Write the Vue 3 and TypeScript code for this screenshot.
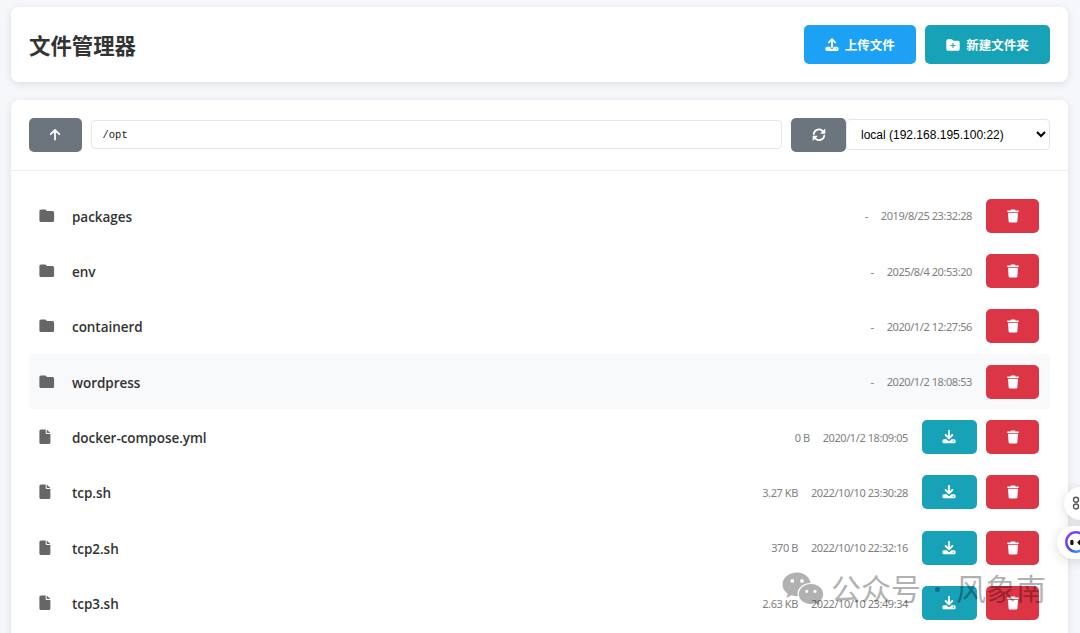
<script setup lang="ts">
import { ref } from 'vue'

interface FileItem {
    name: string
    isDir: boolean
    size: string
    time: string
}

const currentPath = ref('/opt')
const server = ref('local')
const active = ref('wordpress')

const files: FileItem[] = [
    { name: 'packages', isDir: true, size: '-', time: '2019/8/25 23:32:28' },
    { name: 'env', isDir: true, size: '-', time: '2025/8/4 20:53:20' },
    { name: 'containerd', isDir: true, size: '-', time: '2020/1/2 12:27:56' },
    { name: 'wordpress', isDir: true, size: '-', time: '2020/1/2 18:08:53' },
    { name: 'docker-compose.yml', isDir: false, size: '0 B', time: '2020/1/2 18:09:05' },
    { name: 'tcp.sh', isDir: false, size: '3.27 KB', time: '2022/10/10 23:30:28' },
    { name: 'tcp2.sh', isDir: false, size: '370 B', time: '2022/10/10 22:32:16' },
    { name: 'tcp3.sh', isDir: false, size: '2.63 KB', time: '2022/10/10 23:49:34' },
]
</script>

<template>
    <div class="page">
        <header class="card header">
            <h1>文件管理器</h1>
            <div class="header-actions">
                <button class="btn primary">
                    <svg class="icon" viewBox="0 0 14 14">
                        <path d="M7 9V1.6M3.9 4.3 7 1.2l3.1 3.1" class="line" />
                        <path
                            d="M2 8.7h3.4v.6a1.6 1.6 0 0 0 3.2 0v-.6H12a1.6 1.6 0 0 1 1.6 1.6v1A1.6 1.6 0 0 1 12 12.9H2a1.6 1.6 0 0 1-1.6-1.6v-1A1.6 1.6 0 0 1 2 8.7Zm9.3 1.5a.6.6 0 1 0 0 1.2.6.6 0 0 0 0-1.2Z"
                        />
                    </svg>
                    <span>上传文件</span>
                </button>
                <button class="btn info">
                    <svg class="icon" viewBox="0 0 14 14">
                        <path
                            fill-rule="evenodd"
                            d="M2 1.2h3.2c.5 0 .9.2 1.2.5l.7.7c.2.2.4.3.7.3H12a1.7 1.7 0 0 1 1.7 1.7v6.7a1.7 1.7 0 0 1-1.7 1.7H2a1.7 1.7 0 0 1-1.7-1.700V2.900A1.700 1.700 0 0 1 2 1.200Zm4.500 3.700v2H4.500v1h2v2h1v-2h2v-1h-2v-2Z"
                        />
                    </svg>
                    <span>新建文件夹</span>
                </button>
            </div>
        </header>

        <main class="card content">
            <div class="toolbar">
                <button class="btn secondary up">
                    <svg class="icon" viewBox="0 0 14 14">
                        <path d="M7 11.600V2.200M2.700 6.200 7 1.900l4.300 4.300" class="line" />
                    </svg>
                </button>
                <input v-model="currentPath" class="path" type="text" />
                <div class="server">
                    <button class="btn secondary refresh">
                        <svg class="icon" viewBox="0 0 14 14">
                            <path d="M1.700 6A5.300 5.300 0 0 1 11 3.400M12.300 7.600A5.300 5.300 0 0 1 3 10.200" class="line" />
                            <path d="M13.300.600v5.200H8.100ZM.700 13v-5.200h5.200Z" />
                        </svg>
                    </button>
                    <select v-model="server">
                        <option value="local">local (192.168.195.100:22)</option>
                    </select>
                </div>
            </div>

            <ul class="file-list">
                <li v-for="file in files" :key="file.name" class="file" :class="{ active: file.name === active }">
                    <svg v-if="file.isDir" class="file-icon" viewBox="0 0 16 16">
                        <path
                            d="M2 1.500h3.800c.5 0 .8.100 1.100.400l.8.800c.3.300.6.400 1 .400H13.500a1.600 1.600 0 0 1 1.600 1.600v7.700a1.600 1.600 0 0 1-1.600 1.600H2A1.600 1.600 0 0 1 .400 12.400V3.100A1.600 1.600 0 0 1 2 1.500Z"
                        />
                    </svg>
                    <svg v-else class="file-icon" viewBox="0 0 16 16">
                        <path
                            d="M2 .500h4.700v3.500a1 1 0 0 0 1 1h3.700v8.400a1.600 1.600 0 0 1-1.600 1.600H2A1.600 1.600 0 0 1 .400 13.400V2.100A1.600 1.600 0 0 1 2 .500ZM7.700.500l3.700 3.600H7.700Z"
                        />
                    </svg>
                    <span class="name">{{ file.name }}</span>
                    <span class="meta">{{ file.size }}</span>
                    <span class="meta time">{{ file.time }}</span>
                    <div class="actions">
                        <button v-if="!file.isDir" class="btn info small">
                            <svg class="icon" viewBox="0 0 14 14">
                                <path d="M7 .800v7.200M3.700 5 7 8.300 10.300 5" class="line" />
                                <path
                                    d="M1.900 9.200h2.700l1.300 1.200a1.600 1.600 0 0 0 2.200 0l1.300-1.200h2.700a1.500 1.500 0 0 1 1.500 1.500v1a1.500 1.500 0 0 1-1.500 1.500H1.900a1.500 1.500 0 0 1-1.500-1.500v-1a1.500 1.500 0 0 1 1.500-1.500Zm9.500 1.400a.6.6 0 1 0 0 1.200.6.6 0 0 0 0-1.200Z"
                                />
                            </svg>
                        </button>
                        <button class="btn danger small">
                            <svg class="icon" viewBox="0 0 14 14">
                                <path
                                    d="M5 .500h4l.5.900h3.200v1.500H1.300V1.400h3.200ZM2 3.700h10l-.6 8.500a1.400 1.400 0 0 1-1.400 1.300H4a1.400 1.400 0 0 1-1.400-1.300Z"
                                />
                            </svg>
                        </button>
                    </div>
                </li>
            </ul>
        </main>

        <div class="float-btn apps">
            <svg viewBox="0 0 16 16">
                <g fill="none" stroke="#555" stroke-width="1.400">
                    <circle cx="4" cy="4.700" r="2.500" />
                    <circle cx="11.500" cy="4.700" r="2.500" />
                    <circle cx="4" cy="11.500" r="2.500" />
                    <circle cx="11.500" cy="11.500" r="2.500" />
                </g>
            </svg>
        </div>
        <div class="float-btn bot">
            <svg viewBox="0 0 24 24">
                <defs>
                    <linearGradient id="ring" x1="0" y1="0" x2="1" y2="1">
                        <stop offset="0" stop-color="#9a3df0" />
                        <stop offset=".5" stop-color="#4b45f5" />
                        <stop offset="1" stop-color="#28c4f5" />
                    </linearGradient>
                </defs>
                <circle cx="12" cy="12" r="9.700" fill="#fff" stroke="url(#ring)" stroke-width="2.500" />
                <rect x="6.300" y="10" width="3.200" height="5" rx="1" fill="#111" />
                <path d="m17 10-2.500 2.500 2.500 2.500" fill="none" stroke="#111" stroke-width="2" />
            </svg>
        </div>

        <div class="watermark">
            <svg viewBox="0 0 42 34">
                <path
                    fill-rule="evenodd"
                    d="M15 .500C7 .500.500 5.800.500 12.500c0 3.700 2 7 5.200 9.200l-1.300 4.200 5-2.600c1.800.6 4.200 1 6.500.8-1.700-7 4.200-13 12.700-13C27.600 5 22 .500 15 .500ZM10.300 7a1.900 1.900 0 1 1 0 3.800 1.900 1.900 0 0 1 0-3.800Zm9.700 0a1.900 1.900 0 1 1 0 3.800A1.900 1.900 0 0 1 20 7Z"
                />
                <path
                    fill-rule="evenodd"
                    d="M29 12c6.800 0 12.200 4.500 12.200 10.200 0 3-1.600 5.800-4.200 7.700l1 3.400-4-2.100c-1.600.5-3.300.8-5 .8-6.800 0-12.200-4.400-12.200-9.800S22.200 12 29 12Zm-4.200 5.700a1.600 1.600 0 1 0 0 3.200 1.600 1.600 0 0 0 0-3.200Zm8.200 0a1.600 1.600 0 1 0 0 3.200 1.600 1.600 0 0 0 0-3.200Z"
                />
            </svg>
            <span class="account">公众号</span>
            <span class="dot"></span>
            <span class="account">风象南</span>
        </div>
    </div>
</template>

<style>
body {
    margin: 0;
    overflow: hidden;
    background: #f5f7fb;
}
</style>

<style scoped>
.page {
    position: relative;
    box-sizing: border-box;
    height: 633px;
    padding: 7px 12px 0 11px;
    overflow: hidden;
    background: #f5f7fb;
    color: #333;
    font-family: 'Noto Sans', 'Noto Sans CJK SC', sans-serif;
}
.card {
    border-radius: 8px;
    background: #fff;
    box-shadow: 0 2px 9px rgba(0, 0, 0, 0.1);
}
.header {
    display: flex;
    align-items: center;
    justify-content: space-between;
    box-sizing: border-box;
    height: 75px;
    margin-bottom: 18px;
    padding: 0 18px;
}
h1 {
    margin: 0;
    font-size: 21.4px;
    font-weight: 700;
    line-height: 30px;
    font-family: 'Noto Sans CJK SC', sans-serif;
}
.header-actions {
    display: flex;
    gap: 9px;
}
.btn {
    display: flex;
    align-items: center;
    justify-content: center;
    box-sizing: border-box;
    height: 39px;
    padding: 0;
    border: 0;
    border-radius: 5px;
    color: #fff;
    font: 700 12.5px 'Noto Sans CJK SC', sans-serif;
}
.icon {
    width: 14px;
    height: 14px;
    fill: currentColor;
}
.line {
    fill: none;
    stroke: currentColor;
    stroke-width: 1.8;
    stroke-linecap: round;
    stroke-linejoin: round;
}
.header .btn {
    gap: 6px;
}
.primary {
    width: 112.5px;
    background: #1da1f5;
}
.info {
    width: 125px;
    background: #17a2b8;
}
.secondary {
    height: 34px;
    background: #6c757d;
}
.danger {
    background: #dc3545;
}
.content {
    height: 600px;
}
.toolbar {
    display: flex;
    align-items: center;
    box-sizing: border-box;
    height: 71px;
    padding: 0 18px;
    border-bottom: 1px solid #eceef0;
}
.up {
    width: 52.5px;
    margin-right: 9px;
}
.path {
    flex: 1;
    box-sizing: border-box;
    min-width: 0;
    height: 29px;
    margin-right: 9px;
    margin-bottom: 1px;
    padding: 1px 11px 0;
    border: 1px solid #e4e6e9;
    border-radius: 4px;
    color: #222;
    font: 10.5px 'Liberation Mono', monospace;
}
.server {
    display: flex;
    align-items: center;
}
.refresh {
    width: 55px;
}
select {
    box-sizing: border-box;
    width: 204px;
    height: 31px;
    margin-bottom: 1px;
    padding: 0 0 0 10px;
    border: 1px solid #e4e6e9;
    border-radius: 4px;
    background: #fff;
    color: #000;
    font: 12px 'Liberation Sans', sans-serif;
}
.file-list {
    margin: 0;
    padding: 17px 18px 0;
    list-style: none;
}
.file {
    display: flex;
    align-items: center;
    box-sizing: border-box;
    height: 55.35px;
    padding: 0 11px 0 10px;
    border-radius: 5px;
}
.file.active {
    background: #f8f9fb;
}
.file-icon {
    width: 16px;
    height: 16px;
    margin-right: 17px;
    fill: #666;
}
.name {
    flex: 1;
    padding-top: 2px;
    font-family: 'Open Sans', sans-serif;
    font-size: 13.5px;
    font-weight: 600;
    letter-spacing: -0.05px;
}
.meta {
    margin-right: 13px;
    color: #808080;
    font-size: 11px;
    letter-spacing: -0.42px;
}
.time {
    margin-right: 14px;
}
.actions {
    display: flex;
    gap: 9.5px;
}
.small {
    width: 53px;
    height: 34px;
}
.small.info {
    width: 54.5px;
}
.float-btn {
    position: absolute;
    right: -20px;
    box-sizing: border-box;
    background: #fff;
    border-radius: 17px;
    box-shadow: 0 2px 12px rgba(0, 0, 0, 0.14);
}
.apps {
    top: 487px;
    width: 36px;
    height: 33px;
    padding: 8px;
}
.apps svg {
    display: block;
    width: 16px;
    height: 16px;
}
.bot {
    top: 526px;
    width: 43px;
    height: 33px;
    padding: 4px 7px;
}
.bot svg {
    display: block;
    width: 24px;
    height: 24px;
}
.watermark {
    position: absolute;
    top: 571px;
    left: 782px;
    display: flex;
    align-items: center;
    height: 36px;
    color: #000;
    opacity: 0.3;
}
.watermark svg {
    width: 42px;
    height: 34px;
    margin-right: 7px;
}
.account {
    margin-top: -4px;
    font-family: 'Noto Sans CJK SC', sans-serif;
    font-size: 30px;
    line-height: 36px;
}
.dot {
    width: 5px;
    height: 5px;
    margin: 0 16px 0 14px;
    border-radius: 50%;
    background: #000;
}
</style>
